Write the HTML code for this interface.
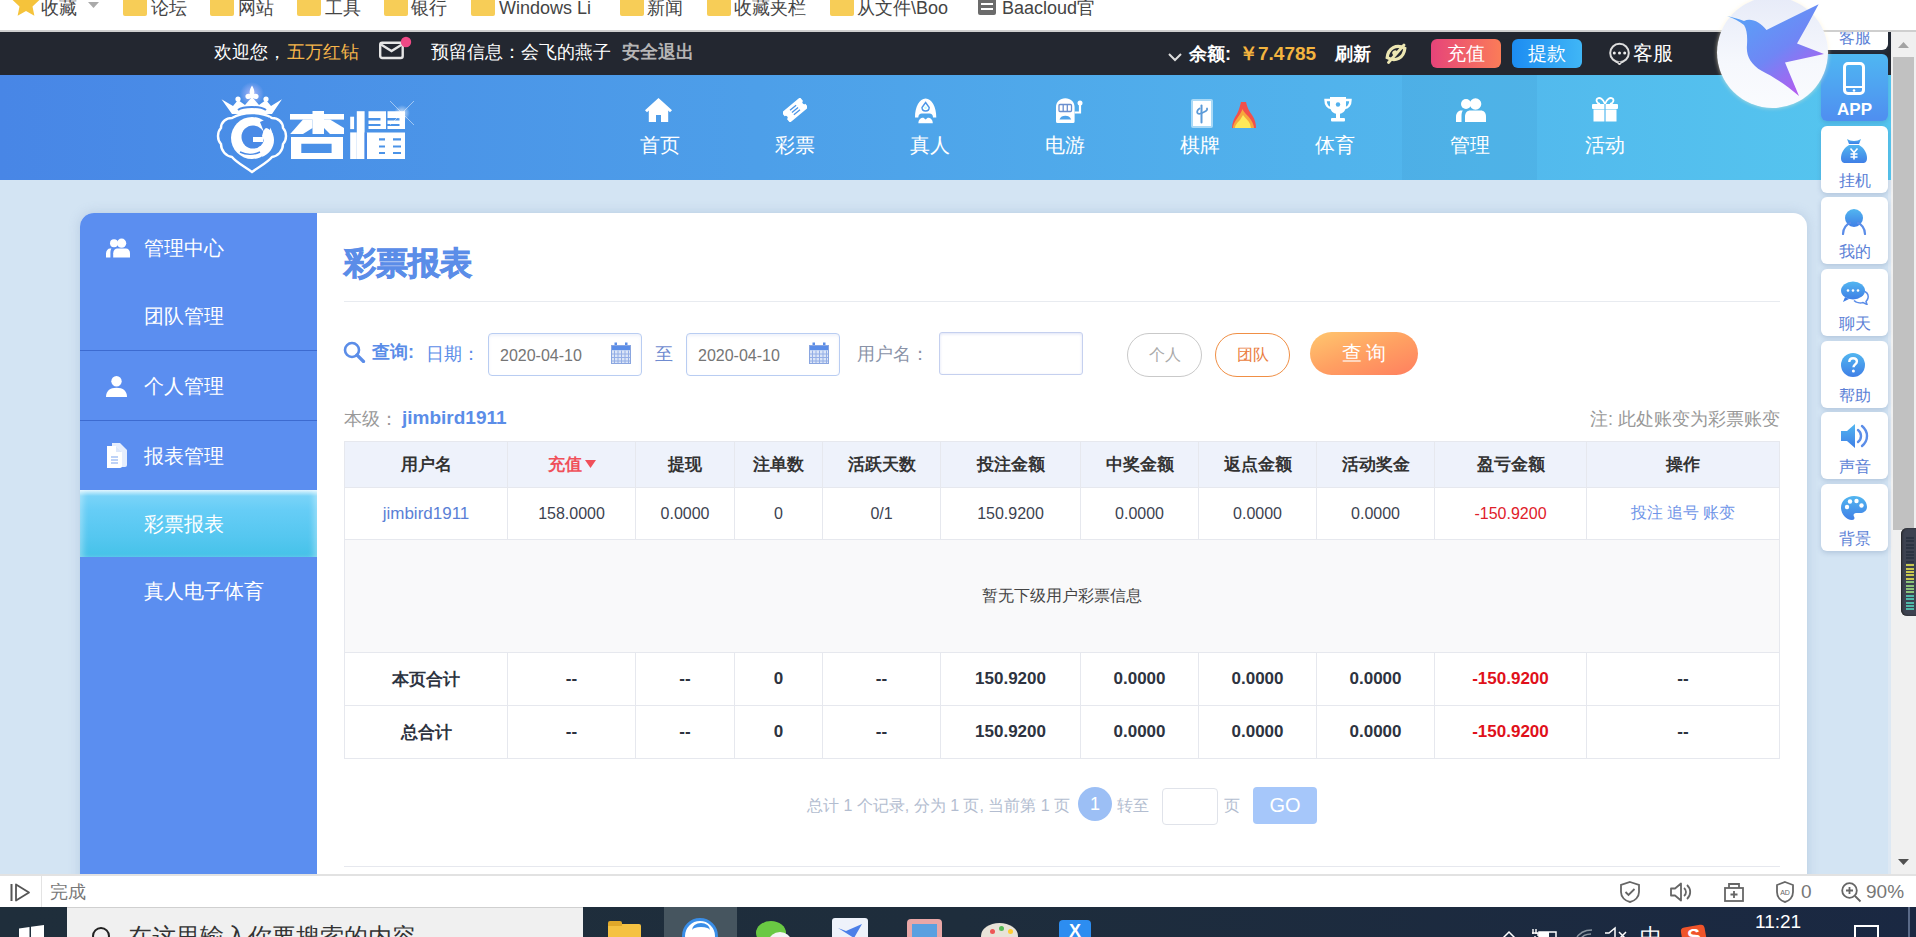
<!DOCTYPE html>
<html><head><meta charset="utf-8">
<style>
*{margin:0;padding:0;box-sizing:border-box}
html,body{width:1916px;height:937px;overflow:hidden;background:#d3e4f3;font-family:"Liberation Sans",sans-serif}
.a{position:absolute}
/* bookmarks bar */
#bm{left:0;top:0;width:1916px;height:32px;background:#fff;border-bottom:2px solid #cfcfcf;overflow:hidden;z-index:5}
#bm span{position:absolute;top:-3px;font-size:18px;color:#444;white-space:nowrap;line-height:22px}
.fold{position:absolute;top:0;width:24px;height:16px;background:#f7cd57;border-radius:0 0 2px 2px}
/* top dark bar */
#topbar{left:0;top:32px;width:1891px;height:43px;background:#232730}
#topbar span{position:absolute;top:8px;font-size:18px;line-height:24px;color:#fff;white-space:nowrap}
/* header */
#hdr{left:0;top:75px;width:1891px;height:105px;background:linear-gradient(90deg,#4886e6 0%,#4d9fe9 40%,#55c6ef 100%)}
.nav{position:absolute;top:0;width:135px;height:105px;text-align:center;color:#fff}
.nav .t{position:absolute;left:0;width:135px;top:57px;font-size:20px;line-height:26px}
.nav svg{position:absolute;left:55px;top:20px}
/* card */
#card{left:80px;top:213px;width:1727px;height:700px;background:#fff;border-radius:14px 14px 0 0;overflow:hidden;box-shadow:0 0 12px rgba(120,150,190,.3)}
#side{left:0;top:0;width:237px;height:700px;background:#5b8ef0}
.si{position:absolute;left:64px;font-size:20px;line-height:26px;color:#fff;white-space:nowrap}
.sep{position:absolute;left:0;width:237px;height:1px;background:#3d6bd0}
/* table */
table{border-collapse:collapse;table-layout:fixed}
td,th{border:1px solid #e6e8ee;text-align:center;font-size:16px;color:#3c4250;padding:0;white-space:nowrap}
th{font-size:17px;font-weight:bold;color:#333}
td.b{font-weight:bold;color:#2d3340;font-size:17px}
/* status + taskbar */
#status{left:0;top:874px;width:1916px;height:33px;background:#fff;border-top:2px solid #e2e2e2}
#task{left:0;top:907px;width:1916px;height:30px;background:linear-gradient(90deg,#1f2e3b,#1e2d3c 50%,#1a2842)}
</style></head><body>

<div id="bm" class="a">
<svg class="a" style="left:11px;top:-11px" width="30" height="30" viewBox="0 0 24 24"><path d="M12 1l3.3 6.9 7.4.9-5.5 5.1 1.5 7.4L12 17.6l-6.7 3.7 1.5-7.4L1.3 8.8l7.4-.9z" fill="#f5c33b"/></svg>
<span style="left:41px">收藏</span>
<svg class="a" style="left:88px;top:2px" width="11" height="6"><path d="M0 0h11L5.5 6z" fill="#aaa"/></svg>
<div class="fold" style="left:123px"></div><span style="left:151px">论坛</span>
<div class="fold" style="left:210px"></div><span style="left:238px">网站</span>
<div class="fold" style="left:297px"></div><span style="left:325px">工具</span>
<div class="fold" style="left:384px"></div><span style="left:411px">银行</span>
<div class="fold" style="left:471px"></div><span style="left:499px">Windows Li</span>
<div class="fold" style="left:620px"></div><span style="left:647px">新闻</span>
<div class="fold" style="left:707px"></div><span style="left:734px">收藏夹栏</span>
<div class="fold" style="left:830px"></div><span style="left:857px">从文件\Boo</span>
<svg class="a" style="left:978px;top:0" width="18" height="15"><path d="M0 0h18v13a2 2 0 0 1-2 2H2a2 2 0 0 1-2-2z" fill="#6b6b6b"/><rect x="3" y="3" width="12" height="2" fill="#fff"/><rect x="3" y="8" width="12" height="2" fill="#fff"/></svg>
<span style="left:1002px">Baacloud官</span>
</div>

<div id="topbar" class="a">
<span style="left:214px">欢迎您，</span>
<span style="left:287px;color:#f6b54a">五万红钻</span>
<svg class="a" style="left:378px;top:4px" width="34" height="26" viewBox="0 0 34 26"><rect x="2.2" y="6.7" width="22.5" height="15.3" rx="2" fill="none" stroke="#e6e6e6" stroke-width="2.4"/><path d="M3 8.5l10.5 6.5 10.5-6.5" fill="none" stroke="#e6e6e6" stroke-width="2.4"/><circle cx="28" cy="6" r="5.2" fill="#ef4a86"/></svg>
<span style="left:431px">预留信息：会飞的燕子</span>
<span style="left:622px;color:#b5b5b5;font-weight:bold">安全退出</span>
<svg class="a" style="left:1168px;top:21px" width="14" height="9"><path d="M1 1l6 6 6-6" fill="none" stroke="#ddd" stroke-width="2"/></svg>
<span style="top:10px;left:1189px;font-weight:bold">余额:</span>
<span style="top:10px;left:1239px;color:#f3b43f;font-weight:bold;font-size:19px">￥7.4785</span>
<span style="top:10px;left:1335px;font-weight:bold">刷新</span>
<svg class="a" style="left:1384px;top:10px" width="24" height="22" viewBox="0 0 24 22"><g transform="rotate(-28 12 11)"><path d="M2 11C5 6.5 8.5 5 12 5S19 6.5 22 11C19 15.5 15.5 17 12 17S5 15.5 2 11Z" fill="none" stroke="#ece6b2" stroke-width="3.2"/><circle cx="11" cy="10.5" r="2.6" fill="#ece6b2"/></g><path d="M4.5 20.5L20 3" stroke="#ece6b2" stroke-width="2.8" stroke-linecap="round"/></svg>
<div class="a" style="left:1431px;top:7px;width:70px;height:29px;border-radius:6px;background:linear-gradient(90deg,#e6447a,#fb7c58)"></div>
<span style="left:1431px;width:70px;text-align:center;top:7px;line-height:29px;font-size:19px">充值</span>
<div class="a" style="left:1512px;top:7px;width:70px;height:29px;border-radius:6px;background:linear-gradient(90deg,#1c8cf2,#40b6f6)"></div>
<span style="left:1512px;width:70px;text-align:center;top:7px;line-height:29px;font-size:19px">提款</span>
<svg class="a" style="left:1608px;top:10px" width="23" height="23" viewBox="0 0 23 23"><circle cx="11.5" cy="11" r="9.3" fill="none" stroke="#ddd" stroke-width="2"/><path d="M9 19.8L11.5 22.5 14 19.8" fill="#232730" stroke="#ddd" stroke-width="1.6"/><circle cx="6.3" cy="11" r="1.5" fill="#eee"/><circle cx="11.5" cy="11" r="1.5" fill="#eee"/><circle cx="16.7" cy="11" r="1.5" fill="#eee"/></svg>
<span style="left:1633px;top:9px;font-size:20px">客服</span>
</div>

<div id="hdr" class="a">
<div class="a" style="left:1402px;top:0;width:135px;height:105px;background:rgba(30,100,160,.07)"></div>
<div class="a" style="left:592px;top:57px;width:135px;text-align:center;font-size:20px;line-height:26px;color:#fff">首页</div>
<div class="a" style="left:645px;top:23px;line-height:0"><svg width="27" height="24" viewBox="0 0 27 24"><path d="M13.5 0L0 12.2l2 2 1.8-1.6V24h7.2v-7h5v7h7.2V12.6l1.8 1.6 2-2z" fill="#fff"/></svg></div>
<div class="a" style="left:727px;top:57px;width:135px;text-align:center;font-size:20px;line-height:26px;color:#fff">彩票</div>
<div class="a" style="left:783px;top:23px;line-height:0"><svg width="24" height="24" viewBox="0 0 24 24"><g transform="rotate(-40 12 12)"><path d="M0 5.5h24v4.7a1.8 1.8 0 0 0 0 3.6v4.7H0v-4.7a1.8 1.8 0 0 0 0-3.6z" fill="#fff"/><path d="M8 9h8M8 12h8M8 15h8" stroke="#4c96e8" stroke-width="1.3"/></g></svg></div>
<div class="a" style="left:862px;top:57px;width:135px;text-align:center;font-size:20px;line-height:26px;color:#fff">真人</div>
<div class="a" style="left:914px;top:23px;line-height:0"><svg width="24" height="26" viewBox="0 0 24 26"><path d="M1 19.5C1 9 5.5 0.6 11.6 0.6S22.3 9 22.3 19.5H19C19 17 17.5 15.5 15.5 15.5H7.8C5.8 15.5 4.3 17 4.3 19.5Z" fill="#fff"/><path d="M11.6 4.5L15.2 9.5C15.2 11.6 13.6 13 11.6 13S8 11.6 8 9.5Z" fill="none" stroke="#4c96e8" stroke-width="1.4"/><circle cx="11.6" cy="9.8" r="1.3" fill="#bff"/><path d="M4.4 25.2C4.4 21.8 6.5 19.8 9.5 19.8L11.6 21.5 13.7 19.8C16.7 19.8 18.8 21.8 18.8 25.2Z" fill="#fff"/></svg></div>
<div class="a" style="left:997px;top:57px;width:135px;text-align:center;font-size:20px;line-height:26px;color:#fff">电游</div>
<div class="a" style="left:1055px;top:23px;line-height:0"><svg width="28" height="26" viewBox="0 0 28 26"><path d="M1 9C1 4 5 0.2 10.3 0.2S19.6 4 19.6 9V23.5a1.5 1.5 0 0 1-1.5 1.5H2.5A1.5 1.5 0 0 1 1 23.5Z" fill="#fff"/><rect x="4" y="6.5" width="12.5" height="7" rx="1" fill="none" stroke="#6a8fcf" stroke-width="1.3"/><path d="M8.2 6.5v7M12.3 6.5v7" stroke="#6a8fcf" stroke-width="1.3"/><path d="M4.5 21.5C5.5 18.8 7.5 17.8 10.3 17.8S15 18.8 16.2 21.5Z" fill="#4fa3ea"/><path d="M19.6 14.5H25V5" fill="none" stroke="#fff" stroke-width="2.2"/><circle cx="25" cy="5" r="2.5" fill="#fff"/></svg></div>
<div class="a" style="left:1132px;top:57px;width:135px;text-align:center;font-size:20px;line-height:26px;color:#fff">棋牌</div>
<div class="a" style="left:1267px;top:57px;width:135px;text-align:center;font-size:20px;line-height:26px;color:#fff">体育</div>
<div class="a" style="left:1324px;top:22px;line-height:0"><svg width="28" height="25" viewBox="0 0 28 25"><path d="M6 0h16v9c0 5-3.6 8-8 8s-8-3-8-8z" fill="#fff"/><path d="M6 3H1.5c0 5 2.5 8 6 8M22 3h4.5c0 5-2.5 8-6 8" fill="none" stroke="#fff" stroke-width="2.4"/><rect x="12" y="16" width="4" height="5" fill="#fff"/><rect x="7" y="21" width="14" height="3.5" rx="1" fill="#fff"/><circle cx="14" cy="7.5" r="2.2" fill="#52b0ec"/></svg></div>
<div class="a" style="left:1402px;top:57px;width:135px;text-align:center;font-size:20px;line-height:26px;color:#fff">管理</div>
<div class="a" style="left:1456px;top:23px;line-height:0"><svg width="30" height="24" viewBox="0 0 30 24"><circle cx="10" cy="6" r="5" fill="#fff"/><circle cx="19.5" cy="6" r="5.8" fill="#fff"/><path d="M0 24v-5c0-4 2.5-6.5 5-6.5h1.8C6 13.5 5.5 15.5 5.5 18v6z" fill="#fff"/><path d="M9 24v-5.5c0-4 2.5-6 5-6h11c2.5 0 5 2 5 6V24z" fill="#fff"/></svg></div>
<div class="a" style="left:1537px;top:57px;width:135px;text-align:center;font-size:20px;line-height:26px;color:#fff">活动</div>
<div class="a" style="left:1592px;top:22px;line-height:0"><svg width="26" height="25" viewBox="0 0 26 25"><path d="M13 7C11 2 8 0 5.5 1.5 3.5 3 5 6.5 8 7M13 7c2-5 5-7 7.5-5.5C22.5 3 21 6.5 18 7" fill="none" stroke="#fff" stroke-width="1.8"/><rect x="0" y="7" width="26" height="5" rx="1" fill="#fff"/><rect x="1.5" y="12.5" width="23" height="12" fill="#fff"/><path d="M13 7v18" stroke="#55b9ee" stroke-width="1.2"/></svg></div>
<div class="a" style="left:1191px;top:24px;width:22px;height:29px;background:#fff;border:2px solid #a9d9f6;border-radius:2px"></div>
<svg class="a" style="left:1191px;top:24px" width="22" height="29" viewBox="0 0 22 29"><path d="M10.5 6.5v17" stroke="#5b9ad8" stroke-width="2" stroke-linecap="round"/><path d="M8.5 9.5c-2.5 1.5-3 4-1.5 5 1.5 1 4.5-.5 7-2 1.8-1 2.5-2.2 2-3" fill="none" stroke="#5b9ad8" stroke-width="1.8" stroke-linecap="round"/></svg>
<svg class="a" style="left:1231px;top:26px" width="25" height="28" viewBox="0 0 25 28"><path d="M10 1L15 1C16 6 18 10 21 14C24 18 25 23 25 27L1 27C1 22 3 17 6 13C8 9 9 5 10 1Z" fill="#f2504b"/><path d="M11.5 8C13 12 17 14 20 19C22 22 23 25 23 27L2 27C2 23 5 19 7 16C9 13 10.5 11 11.5 8Z" fill="#f7a73c"/><path d="M12 14C14 17 18 20 19 23L20 27L4 27C4 24 7 21 9 19C10 17 11 16 12 14Z" fill="#fde95a"/></svg>
<svg class="a" style="left:205px;top:3px" width="215px" height="100px" viewBox="0 0 215 100">
<defs><radialGradient id="gl" cx="50%" cy="50%" r="50%"><stop offset="0" stop-color="#fff" stop-opacity=".95"/><stop offset="1" stop-color="#fff" stop-opacity="0"/></radialGradient>
<radialGradient id="gl2" cx="50%" cy="50%" r="50%"><stop offset="0" stop-color="#d8c8ff" stop-opacity=".7"/><stop offset="1" stop-color="#d8c8ff" stop-opacity="0"/></radialGradient></defs>
<g transform="translate(5,2)"><g>
<circle cx="42" cy="14" r="12" fill="url(#gl2)"/>
<path d="M42 5.5C40 9 39 12 40 14C37 13 35 14.5 35.5 17C36 19.5 39 19.5 41 18L42 22 43 18C45 19.5 48 19.5 48.5 17C49 14.5 47 13 44 14C45 12 44 9 42 5.5Z" fill="#fff"/>
<path d="M11.5 19.3L22 34H62L72 19.3 61 26 56 20 49 25 42 17 35 25 28 20 23 26Z" fill="#fff"/>
<path d="M28 30C33 26 51 26 56 30" fill="none" stroke="#4a8ae6" stroke-width="2"/>
<circle cx="28" cy="19" r="2.6" fill="#fff"/><circle cx="56" cy="19" r="2.6" fill="#fff"/>
<path d="M42 33C50 33 57 35 62 38C68 38 73 42 73 48C77 52 77 60 73 64C73 71 68 76 62 77C57 83 50 86 42 92C34 86 27 83 22 77C16 76 11 71 11 64C7 60 7 52 11 48C11 42 16 38 22 38C27 35 34 33 42 33Z" fill="none" stroke="#fff" stroke-width="2.4"/>
<circle cx="42" cy="58" r="21" fill="#fff"/>
<circle cx="43" cy="57" r="11.5" fill="#4a8ae6"/>
<path d="M50 42L60 37.5V54L54 52Z" fill="#4a8ae6"/>
<path d="M43 57h10v5H43z" fill="#fff"/>
<path d="M56 48C61 49 64 54 64 60C64 68 59 74 52 77C55 70 55 62 52 56C53 52 54 49 56 48Z" fill="#fff"/>
<path d="M30 72C36 75 44 75 50 72" fill="none" stroke="#4a8ae6" stroke-width="1.5"/>
</g></g>
<!-- 杏 -->
<g fill="#fff" transform="translate(85,33)">
<rect x="0" y="3" width="54" height="5.6"/>
<rect x="22.5" y="0" width="11.5" height="23"/>
<path d="M13 8.4h9.5V17L13 23H0.2z"/>
<path d="M34 8.4h6L54 17V23H40L34 17z"/>
<path d="M1 26h52v22H1zM11.3 32.8v9.2h30.3v-9.2z" fill-rule="evenodd"/>
</g>
<!-- 耀 -->
<g fill="#fff" transform="translate(145,33)">
<rect x="0.2" y="5.7" width="3.9" height="12.4"/>
<rect x="6.8" y="0.2" width="7.8" height="47.8"/>
<path d="M0.2 21.4h6.6V48H0.2z"/>
<path d="M18.5 0.2h17.5V18H18.5zM18.5 7v2.6h12V7zM18.5 12.9v2h12v-2z" fill-rule="evenodd"/>
<path d="M37.5 0.2H55V18H37.5zM37.5 7v2.6h12V7zM37.5 12.9v2h12v-2z" fill-rule="evenodd"/>
<path d="M16.5 21.4H55V48H16.5zM29 27.3v2.3h6v-2.3zM43 27.3v2.3h8v-2.3zM29 34.4v2h6v-2zM43 34.4v2h8v-2zM29 41v2h6v-2zM43 41v2h8v-2z" fill-rule="evenodd"/>
<path d="M14.6 21.4h2.4V48h-2.4z" fill="#4a8ae6"/>
</g>
<!-- sparkle -->
<circle cx="197" cy="35" r="8" fill="url(#gl)" opacity=".8"/>
<path d="M185 23l24 24M209 23l-24 24" stroke="#fff" stroke-width=".8" opacity=".6"/>
</svg>
</div>

<div id="card" class="a">
  <div id="side" class="a">
<svg class="a" style="left:26px;top:25px" width="24" height="20" viewBox="0 0 30 24"><circle cx="10" cy="6" r="5" fill="#fff"/><circle cx="19.5" cy="6" r="5.8" fill="#fff"/><path d="M0 24v-5c0-4 2.5-6.5 5-6.5h1.8C6 13.5 5.5 15.5 5.5 18v6z" fill="#fff"/><path d="M9 24v-5.5c0-4 2.5-6 5-6h11c2.5 0 5 2 5 6V24z" fill="#fff"/></svg>
<div class="si" style="top:22px">管理中心</div>
<div class="si" style="top:90px">团队管理</div>
<div class="sep" style="top:137px"></div>
<svg class="a" style="left:26px;top:163px" width="21" height="21" viewBox="0 0 21 21"><circle cx="10.5" cy="5.2" r="5.2" fill="#fff"/><path d="M0 21c0-6 4-9.2 10.5-9.2S21 15 21 21z" fill="#fff"/></svg>
<div class="si" style="top:160px">个人管理</div>
<div class="sep" style="top:207px"></div>
<svg class="a" style="left:26px;top:230px" width="21" height="25" viewBox="0 0 21 25"><path d="M6 0h8l7 7v15a2 2 0 0 1-2 2H6z" fill="#fff" opacity=".85"/><path d="M1 3h9l6 6v14a2 2 0 0 1-2 2H1z" fill="#fff"/><path d="M10 3v6h6" fill="#dce7fb"/><path d="M5 14h7M5 17h7M5 20h7" stroke="#a8c3f5" stroke-width="1.5"/></svg>
<div class="si" style="top:230px">报表管理</div>
<div class="a" style="left:0;top:277px;width:237px;height:67px;background:linear-gradient(180deg,#dff5fe 0%,#79d3f8 9%,#66cdf6 30%,#55c7f0 70%,#45c2e8 100%);box-shadow:inset 6px 0 6px -3px rgba(255,255,255,.35),inset -6px 0 6px -3px rgba(255,255,255,.35)"></div>
<div class="si" style="top:298px">彩票报表</div>
<div class="si" style="top:365px">真人电子体育</div>
</div>
<div class="a" style="left:264px;top:30px;font-size:32px;line-height:40px;font-weight:bold;color:#5b8de8;-webkit-text-stroke:0.9px #5b8de8">彩票报表</div>
<div class="a" style="left:264px;top:88px;width:1436px;height:1px;background:#e8ebf0"></div>

<svg class="a" style="left:263px;top:128px" width="23" height="22" viewBox="0 0 23 22"><circle cx="9" cy="9" r="7" fill="none" stroke="#5b8de8" stroke-width="2.6"/><path d="M14 14l6.5 6.5" stroke="#5b8de8" stroke-width="3.2" stroke-linecap="round"/></svg>
<div class="a" style="left:292px;top:127px;font-size:18px;line-height:24px;color:#5b8de8;font-weight:bold">查询:</div>
<div class="a" style="left:346px;top:129px;font-size:18px;line-height:24px;color:#5b8de8">日期：</div>
<div class="a" style="left:408px;top:120px;width:154px;height:43px;border:1px solid #b9cdf2;border-radius:4px;box-shadow:inset 0 2px 3px rgba(120,150,220,.12)"></div>
<div class="a" style="left:420px;top:132px;font-size:16px;line-height:22px;color:#757575">2020-04-10</div>
<div class="a" style="left:531px;top:129px;line-height:0"><svg width="21" height="22" viewBox="0 0 21 22"><rect x="0" y="3" width="20" height="5.5" fill="#5b8de8"/><rect x="3.5" y="0.5" width="2.5" height="4" fill="#5b8de8"/><rect x="14" y="0.5" width="2.5" height="4" fill="#5b8de8"/><rect x="0" y="8.5" width="20" height="13" fill="#dbe5f7"/><path d="M3.5 8.5v13M7 8.5v13M10.5 8.5v13M14 8.5v13M17.5 8.5v13M0 12h20M0 15.5h20M0 19h20" stroke="#93aee6" stroke-width="1"/><rect x="0.5" y="3.5" width="19" height="18" fill="none" stroke="#8aa6e0" stroke-width="1"/></svg></div>
<div class="a" style="left:575px;top:129px;font-size:18px;line-height:24px;color:#6f8bd0">至</div>
<div class="a" style="left:606px;top:120px;width:154px;height:43px;border:1px solid #b9cdf2;border-radius:4px;box-shadow:inset 0 2px 3px rgba(120,150,220,.12)"></div>
<div class="a" style="left:618px;top:132px;font-size:16px;line-height:22px;color:#757575">2020-04-10</div>
<div class="a" style="left:729px;top:129px;line-height:0"><svg width="21" height="22" viewBox="0 0 21 22"><rect x="0" y="3" width="20" height="5.5" fill="#5b8de8"/><rect x="3.5" y="0.5" width="2.5" height="4" fill="#5b8de8"/><rect x="14" y="0.5" width="2.5" height="4" fill="#5b8de8"/><rect x="0" y="8.5" width="20" height="13" fill="#dbe5f7"/><path d="M3.5 8.5v13M7 8.5v13M10.5 8.5v13M14 8.5v13M17.5 8.5v13M0 12h20M0 15.5h20M0 19h20" stroke="#93aee6" stroke-width="1"/><rect x="0.5" y="3.5" width="19" height="18" fill="none" stroke="#8aa6e0" stroke-width="1"/></svg></div>
<div class="a" style="left:777px;top:129px;font-size:18px;line-height:24px;color:#8a93a8">用户名：</div>
<div class="a" style="left:859px;top:119px;width:144px;height:43px;border:1px solid #c5d0ef;border-radius:3px;box-shadow:inset 0 1px 3px rgba(120,140,220,.25)"></div>
<div class="a" style="left:1047px;top:120px;width:75px;height:44px;border:1px solid #c9c9c9;border-radius:22px;text-align:center;font-size:16px;line-height:42px;color:#aaa">个人</div>
<div class="a" style="left:1135px;top:120px;width:75px;height:44px;border:1px solid #f08f45;border-radius:22px;text-align:center;font-size:16px;line-height:42px;color:#ea7d3e">团队</div>
<div class="a" style="left:1230px;top:119px;width:108px;height:43px;border-radius:22px;background:linear-gradient(160deg,#ffc76f 0%,#ffa062 50%,#ff7f5f 100%);text-align:center;font-size:20px;line-height:43px;color:#fff;letter-spacing:4px;text-indent:4px">查询</div>
<div class="a" style="left:264px;top:194px;font-size:18px;line-height:24px;color:#999">本级：</div>
<div class="a" style="left:322px;top:193px;font-size:19px;line-height:24px;color:#5b8de8;font-weight:bold">jimbird1911</div>
<div class="a" style="left:1510px;top:194px;width:1190px;font-size:18px;line-height:24px;color:#999;white-space:nowrap">注: 此处账变为彩票账变</div>
<div class="a" style="left:264px;top:228px;width:1435px">
<table style="width:1435px">
<colgroup><col style="width:163px"><col style="width:128px"><col style="width:99px"><col style="width:88px"><col style="width:118px"><col style="width:140px"><col style="width:118px"><col style="width:118px"><col style="width:118px"><col style="width:152px"><col style="width:193px"></colgroup>
<tr style="height:46px;background:#eef2fb"><th>用户名</th><th style="color:#f0505a">充值<svg style="margin-left:3px;vertical-align:2px" width="11" height="8"><path d="M0 0h11L5.5 8z" fill="#f0505a"/></svg></th><th>提现</th><th>注单数</th><th>活跃天数</th><th>投注金额</th><th>中奖金额</th><th>返点金额</th><th>活动奖金</th><th>盈亏金额</th><th>操作</th></tr>
<tr style="height:52px"><td class="v"><span style="color:#5b7fd6;font-size:17px">jimbird1911</span></td><td class="v">158.0000</td><td class="v">0.0000</td><td class="v">0</td><td class="v">0/1</td><td class="v">150.9200</td><td class="v">0.0000</td><td class="v">0.0000</td><td class="v">0.0000</td><td class="v"><span style="color:#e0202a">-150.9200</span></td><td class="v"><span style="color:#6f95e8">投注 追号 账变</span></td></tr>
<tr style="height:113px;background:#f9f9fa"><td colspan="11" class="v" style="color:#444">暂无下级用户彩票信息</td></tr>
<tr style="height:53px"><td class="b">本页合计</td><td class="b">--</td><td class="b">--</td><td class="b">0</td><td class="b">--</td><td class="b">150.9200</td><td class="b">0.0000</td><td class="b">0.0000</td><td class="b">0.0000</td><td class="b"><span style="color:#e0101a">-150.9200</span></td><td class="b">--</td></tr>
<tr style="height:53px"><td class="b">总合计</td><td class="b">--</td><td class="b">--</td><td class="b">0</td><td class="b">--</td><td class="b">150.9200</td><td class="b">0.0000</td><td class="b">0.0000</td><td class="b">0.0000</td><td class="b"><span style="color:#e0101a">-150.9200</span></td><td class="b">--</td></tr>
</table>
</div>
<div class="a" style="left:727px;top:582px;font-size:16px;line-height:22px;color:#b3bdd0;white-space:nowrap">总计 1 个记录, 分为 1 页, 当前第 1 页</div>
<div class="a" style="left:998px;top:574px;width:34px;height:34px;border-radius:17px;background:#9cbff5;text-align:center;font-size:18px;line-height:34px;color:#fff">1</div>
<div class="a" style="left:1037px;top:582px;font-size:16px;line-height:22px;color:#b3bdd0">转至</div>
<div class="a" style="left:1082px;top:575px;width:56px;height:37px;border:1px solid #e0e3ea;border-radius:4px"></div>
<div class="a" style="left:1144px;top:582px;font-size:16px;line-height:22px;color:#b3bdd0">页</div>
<div class="a" style="left:1173px;top:574px;width:64px;height:37px;border-radius:4px;background:#a6c7fa;text-align:center;font-size:20px;line-height:37px;color:#fff">GO</div>
<div class="a" style="left:264px;top:653px;width:1436px;height:1px;background:#e6e8ee"></div>
</div>

<div id="status" class="a">
<svg class="a" style="left:10px;top:7px" width="21" height="19" viewBox="0 0 21 19"><path d="M1.5 1v17" stroke="#555" stroke-width="2"/><path d="M6 1.5l13 8-13 8z" fill="none" stroke="#555" stroke-width="1.8" stroke-linejoin="round"/></svg>
<div class="a" style="left:41px;top:0;width:1px;height:32px;background:#e3e3e3"></div>
<div class="a" style="left:50px;top:4px;font-size:18px;line-height:24px;color:#777">完成</div>
<svg class="a" style="left:1619px;top:5px" width="22" height="22" viewBox="0 0 22 22"><path d="M11 1l9 3v7c0 5-4 9-9 10C6 20 2 16 2 11V4z" fill="none" stroke="#666" stroke-width="1.8"/><path d="M6.5 11l3 3 6-6" fill="none" stroke="#666" stroke-width="1.8"/></svg>
<svg class="a" style="left:1670px;top:6px" width="22" height="20" viewBox="0 0 22 20"><path d="M1 6.5h4l6-5v17l-6-5H1z" fill="none" stroke="#666" stroke-width="1.8" stroke-linejoin="round"/><path d="M14 6c1.3 1 2 2.4 2 4s-.7 3-2 4M17 3c2 1.8 3.2 4.2 3.2 7s-1.2 5.2-3.2 7" fill="none" stroke="#666" stroke-width="1.8"/></svg>
<svg class="a" style="left:1724px;top:6px" width="20" height="20" viewBox="0 0 20 20"><rect x="1" y="6" width="18" height="13" fill="none" stroke="#666" stroke-width="1.8"/><path d="M5 6V2h10v4M10 9v7M6.5 12.5h7" fill="none" stroke="#666" stroke-width="1.8"/></svg>
<svg class="a" style="left:1775px;top:5px" width="20" height="22" viewBox="0 0 20 22"><path d="M10 1l8 3v7c0 5-3.5 9-8 10C5.5 20 2 16 2 11V4z" fill="none" stroke="#666" stroke-width="1.8"/><text x="10" y="14" font-size="7" text-anchor="middle" fill="#666" font-family="Liberation Sans">AD</text></svg>
<div class="a" style="left:1801px;top:4px;font-size:19px;line-height:24px;color:#777">0</div>
<svg class="a" style="left:1841px;top:6px" width="21" height="21" viewBox="0 0 21 21"><circle cx="8.5" cy="8.5" r="7.3" fill="none" stroke="#666" stroke-width="1.8"/><path d="M8.5 5v7M5 8.5h7M14 14l5.5 5.5" stroke="#666" stroke-width="1.8"/></svg>
<div class="a" style="left:1866px;top:4px;font-size:19px;line-height:24px;color:#777">90%</div>
</div>
<div id="task" class="a">
<svg class="a" style="left:19px;top:18px" width="25" height="14" viewBox="0 0 25 14"><path d="M0 3.5L10.5 2v10H0zM12 1.8L25 0v12H12z" fill="#fff"/></svg>
<div class="a" style="left:67px;top:0;width:516px;height:30px;background:#f0f0f0;border-top:1px solid #d0d0d0"></div>
<svg class="a" style="left:91px;top:19px" width="22" height="14" viewBox="0 0 22 14"><circle cx="10" cy="10" r="8" fill="none" stroke="#222" stroke-width="2"/></svg>
<div class="a" style="left:128px;top:15px;font-size:24px;line-height:30px;color:#333;white-space:nowrap">在这里输入你要搜索的内容</div>
<div class="a" style="left:664px;top:0;width:73px;height:30px;background:#46555f"></div>
<div class="a" style="left:608px;top:17px;width:33px;height:15px;background:#f5c242;border-radius:2px 2px 0 0"></div>
<div class="a" style="left:608px;top:14px;width:14px;height:5px;background:#e0a82a;border-radius:2px 2px 0 0"></div>
<div class="a" style="left:682px;top:11px;width:36px;height:36px;border-radius:50%;background:#fff;border:3px solid #3a8ee8"></div>
<div class="a" style="left:692px;top:16px;width:18px;height:14px;border-radius:50%;border-top:4px solid #3a8ee8"></div>
<div class="a" style="left:756px;top:14px;width:30px;height:24px;border-radius:50%;background:#6ac943"></div>
<div class="a" style="left:769px;top:25px;width:22px;height:18px;border-radius:50%;background:#f4f4f4"></div>
<div class="a" style="left:832px;top:11px;width:36px;height:30px;border-radius:3px;background:#eef2fa"></div>
<svg class="a" style="left:838px;top:17px" width="26" height="14" viewBox="0 0 26 14"><path d="M0 4l8 3 16-7-8 14z" fill="#4b7fe8"/></svg>
<div class="a" style="left:907px;top:12px;width:35px;height:30px;border-radius:4px;background:#e9a7a7"></div>
<div class="a" style="left:912px;top:17px;width:25px;height:20px;background:#5aa0e0"></div>
<div class="a" style="left:981px;top:16px;width:37px;height:26px;border-radius:50% 50% 0 0;background:#e8e3d8"></div>
<div class="a" style="left:990px;top:22px;width:5px;height:5px;border-radius:50%;background:#e55"></div>
<div class="a" style="left:999px;top:19px;width:5px;height:5px;border-radius:50%;background:#5b5"></div>
<div class="a" style="left:1008px;top:22px;width:5px;height:5px;border-radius:50%;background:#fc3"></div>
<div class="a" style="left:1059px;top:13px;width:32px;height:30px;border-radius:4px;background:#2d8df0"></div>
<div class="a" style="left:1059px;top:14px;width:32px;text-align:center;font-size:18px;font-weight:bold;color:#fff;line-height:20px">X</div>
<svg class="a" style="left:1501px;top:23px" width="16" height="10"><path d="M1 9l7-7 7 7" fill="none" stroke="#fff" stroke-width="1.5"/></svg>
<svg class="a" style="left:1531px;top:21px" width="28" height="12"><path d="M2 1v5M5 1v5M1 5h6v3M4 8v4" stroke="#fff" stroke-width="1.4" fill="none"/><rect x="8" y="4" width="17" height="10" fill="none" stroke="#fff" stroke-width="1.5"/><rect x="8" y="4" width="10" height="10" fill="#fff"/></svg>
<svg class="a" style="left:1574px;top:20px" width="20" height="13"><path d="M2 12c3-6 9-9 16-9" fill="none" stroke="#8a95a0" stroke-width="1.5"/><path d="M6 13c2-4 6-6 11-6" fill="none" stroke="#8a95a0" stroke-width="1.5"/></svg>
<svg class="a" style="left:1604px;top:19px" width="26" height="13"><path d="M1 7h4l6-5v11" fill="none" stroke="#fff" stroke-width="1.5"/><path d="M15 6l7 7M22 6l-7 7" stroke="#fff" stroke-width="1.5"/></svg>
<div class="a" style="left:1640px;top:17px;font-size:22px;line-height:26px;color:#fff">中</div>
<div class="a" style="left:1682px;top:19px;width:24px;height:22px;border-radius:4px;background:#f0542a;transform:rotate(-10deg)"></div><div class="a" style="left:1684px;top:17px;width:20px;text-align:center;font-size:20px;line-height:24px;font-weight:bold;color:#fff;transform:rotate(-10deg)">S</div>
<div class="a" style="left:1755px;top:4px;font-size:19px;line-height:22px;color:#fff">11:21</div>
<div class="a" style="left:1854px;top:18px;width:25px;height:20px;border:2px solid #fff"></div>
<div class="a" style="left:1908px;top:0;width:2px;height:30px;background:#5a6a88"></div>
</div>

<!-- right column bg strip -->
<div class="a" style="left:1888px;top:180px;width:3px;height:694px;background:#dde8f3"></div>
<!-- scrollbar -->
<div class="a" style="left:1891px;top:31px;width:25px;height:843px;background:#f0f0f0"></div>
<svg class="a" style="left:1898px;top:42px" width="11" height="6"><path d="M0 6h11L5.5 0z" fill="#a3a3a3"/></svg>
<div class="a" style="left:1893px;top:57px;width:21px;height:473px;background:#c1c1c1"></div>
<svg class="a" style="left:1898px;top:859px" width="11" height="6"><path d="M0 0h11L5.5 6z" fill="#505050"/></svg>
<!-- volume widget -->
<div class="a" style="left:1901px;top:528px;width:18px;height:88px;background:#3d4250;border-radius:6px 0 0 6px;box-shadow:inset 1px 0 2px #222"></div>
<div class="a" style="left:1906px;top:537.0px;width:8px;height:2px;background:#2c3442"></div><div class="a" style="left:1906px;top:540.4px;width:8px;height:2px;background:#2c3442"></div><div class="a" style="left:1906px;top:543.8px;width:8px;height:2px;background:#2c3442"></div><div class="a" style="left:1906px;top:547.2px;width:8px;height:2px;background:#2c3442"></div><div class="a" style="left:1906px;top:550.6px;width:8px;height:2px;background:#2c3442"></div><div class="a" style="left:1906px;top:554.0px;width:8px;height:2px;background:#2c3442"></div><div class="a" style="left:1906px;top:557.4px;width:8px;height:2px;background:#2c3442"></div><div class="a" style="left:1906px;top:560.8px;width:8px;height:2px;background:#2c3442"></div><div class="a" style="left:1906px;top:564.2px;width:8px;height:2px;background:#c8c850"></div><div class="a" style="left:1906px;top:567.6px;width:8px;height:2px;background:#c8c850"></div><div class="a" style="left:1906px;top:571.0px;width:8px;height:2px;background:#c8c850"></div><div class="a" style="left:1906px;top:574.4px;width:8px;height:2px;background:#c8c850"></div><div class="a" style="left:1906px;top:577.8px;width:8px;height:2px;background:#c8c850"></div><div class="a" style="left:1906px;top:581.2px;width:8px;height:2px;background:#8ac37a"></div><div class="a" style="left:1906px;top:584.6px;width:8px;height:2px;background:#8ac37a"></div><div class="a" style="left:1906px;top:588.0px;width:8px;height:2px;background:#8ac37a"></div><div class="a" style="left:1906px;top:591.4px;width:8px;height:2px;background:#8ac37a"></div><div class="a" style="left:1906px;top:594.8px;width:8px;height:2px;background:#4fb8a8"></div><div class="a" style="left:1906px;top:598.2px;width:8px;height:2px;background:#4fb8a8"></div><div class="a" style="left:1906px;top:601.6px;width:8px;height:2px;background:#4fb8a8"></div><div class="a" style="left:1906px;top:605.0px;width:8px;height:2px;background:#4fb8a8"></div><div class="a" style="left:1906px;top:608.4px;width:8px;height:2px;background:#4fb8a8"></div>
<div class="a" style="left:1821px;top:-17px;width:67px;height:67px;border-radius:6px;background:#fff;box-shadow:0 2px 5px rgba(60,90,140,.22)"></div>
<div class="a" style="left:1821px;top:28px;width:67px;text-align:center;font-size:16px;line-height:20px;color:#5b7fd6">客服</div>
<div class="a" style="left:1821px;top:54px;width:67px;height:67px;border-radius:6px;background:linear-gradient(180deg,#4fb7f2 0%,#4f8ef0 100%);box-shadow:0 2px 4px rgba(40,80,140,.2)"></div>
<svg class="a" style="left:1843px;top:62px" width="22" height="33" viewBox="0 0 22 33"><rect x="1.5" y="1.5" width="19" height="30" rx="3.5" fill="none" stroke="#fff" stroke-width="3"/><path d="M2 25h18" stroke="#fff" stroke-width="2"/><circle cx="11" cy="28.5" r="1.3" fill="#fff"/></svg>
<div class="a" style="left:1821px;top:100px;width:67px;text-align:center;font-size:17px;line-height:20px;color:#fff;font-weight:bold">APP</div>
<div class="a" style="left:1821px;top:125.5px;width:67px;height:67px;border-radius:6px;background:#fff;box-shadow:0 2px 5px rgba(60,90,140,.22)"></div>
<div class="a" style="left:1841px;top:137.5px;width:28px;height:28px;line-height:0"><svg width="26" height="26" viewBox="0 0 26 26"><defs><linearGradient id="bg1" x1="0" y1="0" x2="0" y2="1"><stop offset="0" stop-color="#52b6f0"/><stop offset="1" stop-color="#3f7fe6"/></linearGradient></defs><path d="M6 1c2 1 4 2 7 2s5-1 7-2l-2 5H8z" fill="url(#bg1)"/><path d="M8 7h10c5 3 8 8 8 13 0 4-2 5-4 5H4c-2 0-4-1-4-5 0-5 3-10 8-13z" fill="url(#bg1)"/><path d="M9.5 10.5l3.5 4 3.5-4M13 14.5v7M9.5 16h7M9.5 19h7" stroke="#fff" stroke-width="1.6" fill="none"/></svg></div>
<div class="a" style="left:1821px;top:170.5px;width:67px;text-align:center;font-size:16px;line-height:20px;color:#5b7fd6">挂机</div>
<div class="a" style="left:1821px;top:197px;width:67px;height:67px;border-radius:6px;background:#fff;box-shadow:0 2px 5px rgba(60,90,140,.22)"></div>
<div class="a" style="left:1841px;top:209px;width:28px;height:28px;line-height:0"><svg width="26" height="26" viewBox="0 0 26 26"><defs><linearGradient id="bg2" x1="0" y1="0" x2="0" y2="1"><stop offset="0" stop-color="#52b6f0"/><stop offset="1" stop-color="#3f7fe6"/></linearGradient></defs><circle cx="13" cy="9" r="9" fill="url(#bg2)"/><path d="M2 25c0-6 4-10 7-11M24 25c0-6-4-10-7-11" fill="none" stroke="#5b8de8" stroke-width="2.2" stroke-linecap="round"/></svg></div>
<div class="a" style="left:1821px;top:242px;width:67px;text-align:center;font-size:16px;line-height:20px;color:#5b7fd6">我的</div>
<div class="a" style="left:1821px;top:269px;width:67px;height:67px;border-radius:6px;background:#fff;box-shadow:0 2px 5px rgba(60,90,140,.22)"></div>
<div class="a" style="left:1841px;top:281px;width:28px;height:28px;line-height:0"><svg width="28" height="24" viewBox="0 0 28 24"><defs><linearGradient id="bg3" x1="0" y1="0" x2="0" y2="1"><stop offset="0" stop-color="#52b6f0"/><stop offset="1" stop-color="#3f7fe6"/></linearGradient></defs><path d="M20 9c5 1 8 4 7 8-.3 1.5-1 2.5-2 3.5l1 3-4-2c-3 1-7 0-9-2" fill="#fff" stroke="#5b8de8" stroke-width="1.5"/><ellipse cx="12" cy="9.5" rx="12" ry="9" fill="url(#bg3)"/><path d="M4 16l-2 5 6-3z" fill="#3f7fe6"/><circle cx="7" cy="9.5" r="1.3" fill="#fff"/><circle cx="12" cy="9.5" r="1.3" fill="#fff"/><circle cx="17" cy="9.5" r="1.3" fill="#fff"/></svg></div>
<div class="a" style="left:1821px;top:314px;width:67px;text-align:center;font-size:16px;line-height:20px;color:#5b7fd6">聊天</div>
<div class="a" style="left:1821px;top:340.5px;width:67px;height:67px;border-radius:6px;background:#fff;box-shadow:0 2px 5px rgba(60,90,140,.22)"></div>
<div class="a" style="left:1841px;top:352.5px;width:28px;height:28px;line-height:0"><svg width="24" height="24" viewBox="0 0 24 24"><defs><linearGradient id="bg4" x1="0" y1="0" x2="0" y2="1"><stop offset="0" stop-color="#52b6f0"/><stop offset="1" stop-color="#3f7fe6"/></linearGradient></defs><circle cx="12" cy="12" r="12" fill="url(#bg4)"/><path d="M8.3 9c0-2.3 1.6-3.8 3.8-3.8s3.8 1.4 3.8 3.4c0 2.8-3.4 2.8-3.4 5.6" fill="none" stroke="#fff" stroke-width="2.4"/><circle cx="12.4" cy="18" r="1.5" fill="#fff"/></svg></div>
<div class="a" style="left:1821px;top:385.5px;width:67px;text-align:center;font-size:16px;line-height:20px;color:#5b7fd6">帮助</div>
<div class="a" style="left:1821px;top:412px;width:67px;height:67px;border-radius:6px;background:#fff;box-shadow:0 2px 5px rgba(60,90,140,.22)"></div>
<div class="a" style="left:1841px;top:424px;width:28px;height:28px;line-height:0"><svg width="28" height="24" viewBox="0 0 28 24"><defs><linearGradient id="bg5" x1="0" y1="0" x2="0" y2="1"><stop offset="0" stop-color="#52b6f0"/><stop offset="1" stop-color="#3f7fe6"/></linearGradient></defs><path d="M0 7h6l8-7v24l-8-7H0z" fill="url(#bg5)"/><path d="M17 6c2 1.5 3 3.6 3 6s-1 4.5-3 6M21 2c3 2.5 5 6 5 10s-2 7.5-5 10" fill="none" stroke="#5b8de8" stroke-width="2.4" stroke-linecap="round"/></svg></div>
<div class="a" style="left:1821px;top:457px;width:67px;text-align:center;font-size:16px;line-height:20px;color:#5b7fd6">声音</div>
<div class="a" style="left:1821px;top:484px;width:67px;height:67px;border-radius:6px;background:#fff;box-shadow:0 2px 5px rgba(60,90,140,.22)"></div>
<div class="a" style="left:1841px;top:496px;width:28px;height:28px;line-height:0"><svg width="26" height="24" viewBox="0 0 26 24"><defs><linearGradient id="bg6" x1="0" y1="0" x2="0" y2="1"><stop offset="0" stop-color="#52b6f0"/><stop offset="1" stop-color="#3f7fe6"/></linearGradient></defs><path d="M13 0C5.5 0 0 5 0 11.5 0 18 5 24 11 24c2.5 0 3-2 2-3.5-1-1.6 0-3.5 2-3.5h4c4 0 7-2.5 7-6C26 4.5 20.5 0 13 0z" fill="url(#bg6)"/><circle cx="6" cy="11" r="2.2" fill="#fff"/><circle cx="9" cy="5.5" r="2.2" fill="#fff"/><circle cx="15.5" cy="5" r="2.2" fill="#fff"/><circle cx="20.5" cy="9.5" r="2.2" fill="#fff"/></svg></div>
<div class="a" style="left:1821px;top:529px;width:67px;text-align:center;font-size:16px;line-height:20px;color:#5b7fd6">背景</div>
<div class="a" style="z-index:8;left:1717px;top:-3px;width:111px;height:111px;border-radius:50%;background:linear-gradient(180deg,#e7ebf8,#f6f8fd 60%,#fafbfe);box-shadow:0 0 4px rgba(255,240,200,.6)"></div>
<svg class="a" style="z-index:9;left:1710px;top:0" width="130" height="115" viewBox="0 0 130 115"><defs><linearGradient id="bird" x1="0.1" y1="0.1" x2="0.75" y2="0.95"><stop offset="0" stop-color="#58a2f7"/><stop offset=".55" stop-color="#6f86f5"/><stop offset="1" stop-color="#b35df0"/></linearGradient></defs>
<path d="M17 16C24 17.5 30 19.5 34 21C41 17.5 50 22 56.5 30L108.6 4.3L98 24L87 43.6L114 54L75 62.6L89 96C75 84 62 76 52 71C40 64 36 55 37 45C37.5 36 37 30 34 25C29 21 23 18 17 16Z" fill="url(#bird)"/></svg>

</body></html>
